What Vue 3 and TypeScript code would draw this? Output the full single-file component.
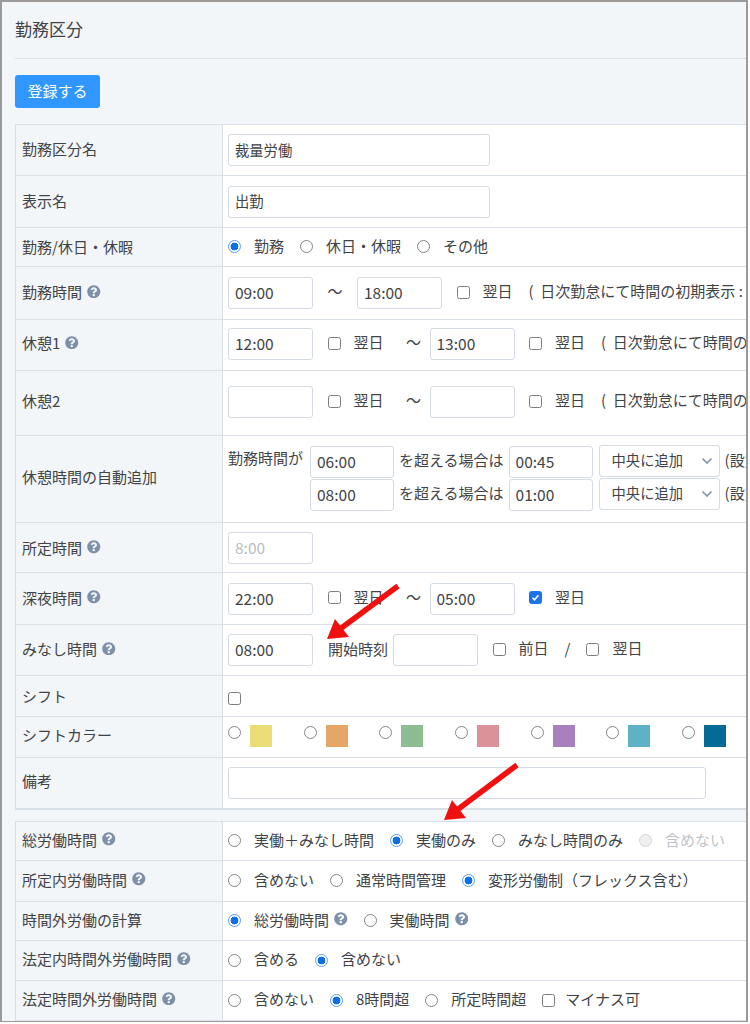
<script setup lang="ts">
const swatches: string[] = ['#ecdc78', '#e5a767', '#8cbc92', '#da9198', '#a87fbf', '#5fb2c6', '#056a96']
const helpPath = 'M504 256c0 136.997-111.043 248-248 248S8 392.997 8 256C8 119.083 119.043 8 256 8s248 111.083 248 248zM262.655 90c-54.497 0-89.255 22.957-116.549 63.758-3.536 5.286-2.353 12.415 2.715 16.258l34.699 26.31c5.205 3.947 12.621 3.008 16.665-2.122 17.864-22.658 30.113-35.797 57.303-35.797 20.429 0 45.698 13.148 45.698 32.958 0 14.976-12.363 22.667-32.534 33.976C247.128 238.528 216 254.941 216 296v4c0 6.627 5.373 12 12 12h56c6.627 0 12-5.373 12-12v-1.333c0-28.462 83.186-29.647 83.186-106.667 0-58.002-60.165-102-116.531-102zM256 338c-25.365 0-46 20.635-46 46 0 25.364 20.635 46 46 46s46-20.636 46-46c0-25.365-20.635-46-46-46z'
</script>

<template>
  <div class="frame">
    <h1 class="title">勤務区分</h1>
    <button class="submit" type="button">登録する</button>

    <section class="table">
      <div class="row h51">
        <div class="label">勤務区分名</div>
        <div class="cell"><input class="field wide" value="裁量労働" /></div>
      </div>
      <div class="row h52">
        <div class="label">表示名</div>
        <div class="cell"><input class="field wide" value="出勤" /></div>
      </div>
      <div class="row h39">
        <div class="label flat">勤務/休日・休暇</div>
        <div class="cell">
          <label class="opt"><input class="radio" type="radio" name="a" checked />勤務</label>
          <label class="opt"><input class="radio" type="radio" name="a" />休日・休暇</label>
          <label class="opt"><input class="radio" type="radio" name="a" />その他</label>
        </div>
      </div>
      <div class="row h53">
        <div class="label">勤務時間<svg class="help" viewBox="0 0 512 512"><path :d="helpPath" /></svg></div>
        <div class="cell">
          <input class="field time" value="09:00" />
          <span class="tilde">～</span>
          <input class="field time" value="18:00" />
          <label class="chk"><input class="box" type="checkbox" />翌日</label>
          <span class="note">(&nbsp;&nbsp;日次勤怠にて時間の初期表示 :</span>
        </div>
      </div>
      <div class="row h51">
        <div class="label up2">休憩1<svg class="help" viewBox="0 0 512 512"><path :d="helpPath" /></svg></div>
        <div class="cell lift">
          <input class="field time" value="12:00" />
          <label class="chk"><input class="box" type="checkbox" />翌日</label>
          <span class="tilde narrow">～</span>
          <input class="field time" value="13:00" />
          <label class="chk"><input class="box" type="checkbox" />翌日</label>
          <span class="note">(&nbsp;&nbsp;日次勤怠にて時間の初期表示 :</span>
        </div>
      </div>
      <div class="row h65">
        <div class="label up">休憩2</div>
        <div class="cell lift">
          <input class="field time" value="" />
          <label class="chk"><input class="box" type="checkbox" />翌日</label>
          <span class="tilde narrow">～</span>
          <input class="field time" value="" />
          <label class="chk"><input class="box" type="checkbox" />翌日</label>
          <span class="note">(&nbsp;&nbsp;日次勤怠にて時間の初期表示 :</span>
        </div>
      </div>
      <div class="row h87">
        <div class="label up">休憩時間の自動追加</div>
        <div class="cell auto">
          <span class="auto-lead">勤務時間が</span>
          <div class="auto-lines">
            <div class="auto-line">
              <input class="field time slim" value="06:00" />
              <span class="over">を超える場合は</span>
              <input class="field time slim" value="00:45" />
              <span class="select">中央に追加<svg class="caret" viewBox="0 0 12 8"><path d="M1.5 1.5 6 6l4.500-4.500" /></svg></span>
              <span class="set">(設定</span>
            </div>
            <div class="auto-line">
              <input class="field time slim" value="08:00" />
              <span class="over">を超える場合は</span>
              <input class="field time slim" value="01:00" />
              <span class="select">中央に追加<svg class="caret" viewBox="0 0 12 8"><path d="M1.5 1.5 6 6l4.500-4.500" /></svg></span>
              <span class="set">(設定</span>
            </div>
          </div>
        </div>
      </div>
      <div class="row h50">
        <div class="label flat">所定時間<svg class="help" viewBox="0 0 512 512"><path :d="helpPath" /></svg></div>
        <div class="cell"><input class="field time off" value="8:00" disabled /></div>
      </div>
      <div class="row h52">
        <div class="label">深夜時間<svg class="help" viewBox="0 0 512 512"><path :d="helpPath" /></svg></div>
        <div class="cell">
          <input class="field time" value="22:00" />
          <label class="chk"><input class="box" type="checkbox" />翌日</label>
          <span class="tilde narrow">～</span>
          <input class="field time" value="05:00" />
          <label class="chk"><input class="box" type="checkbox" checked />翌日</label>
        </div>
      </div>
      <div class="row h51">
        <div class="label">みなし時間<svg class="help" viewBox="0 0 512 512"><path :d="helpPath" /></svg></div>
        <div class="cell">
          <input class="field time" value="08:00" />
          <span class="start">開始時刻</span>
          <input class="field time" value="" />
          <label class="chk"><input class="box" type="checkbox" />前日</label>
          <span class="slash">/</span>
          <label class="chk tight"><input class="box" type="checkbox" />翌日</label>
        </div>
      </div>
      <div class="row h41">
        <div class="label flat">シフト</div>
        <div class="cell"><input class="box low" type="checkbox" /></div>
      </div>
      <div class="row h41">
        <div class="label up">シフトカラー</div>
        <div class="cell colors">
          <label v-for="c in swatches" :key="c" class="color">
            <input class="radio" type="radio" name="color" />
            <span class="swatch" :style="{ background: c }"></span>
          </label>
        </div>
      </div>
      <div class="row h51">
        <div class="label up">備考</div>
        <div class="cell"><input class="field memo" value="" /></div>
      </div>
    </section>

    <section class="table second">
      <div class="row h39">
        <div class="label">総労働時間<svg class="help" viewBox="0 0 512 512"><path :d="helpPath" /></svg></div>
        <div class="cell">
          <label class="opt"><input class="radio" type="radio" name="b" />実働＋みなし時間</label>
          <label class="opt"><input class="radio" type="radio" name="b" checked />実働のみ</label>
          <label class="opt"><input class="radio" type="radio" name="b" />みなし時間のみ</label>
          <label class="opt muted"><input class="radio" type="radio" name="b" disabled />含めない</label>
        </div>
      </div>
      <div class="row h41">
        <div class="label">所定内労働時間<svg class="help" viewBox="0 0 512 512"><path :d="helpPath" /></svg></div>
        <div class="cell">
          <label class="opt"><input class="radio" type="radio" name="c" />含めない</label>
          <label class="opt"><input class="radio" type="radio" name="c" />通常時間管理</label>
          <label class="opt"><input class="radio" type="radio" name="c" checked />変形労働制（フレックス含む）</label>
        </div>
      </div>
      <div class="row h39">
        <div class="label">時間外労働の計算</div>
        <div class="cell">
          <label class="opt"><input class="radio" type="radio" name="d" checked />総労働時間<svg class="help inline" viewBox="0 0 512 512"><path :d="helpPath" /></svg></label>
          <label class="opt"><input class="radio" type="radio" name="d" />実働時間<svg class="help inline" viewBox="0 0 512 512"><path :d="helpPath" /></svg></label>
        </div>
      </div>
      <div class="row h40">
        <div class="label">法定内時間外労働時間<svg class="help" viewBox="0 0 512 512"><path :d="helpPath" /></svg></div>
        <div class="cell">
          <label class="opt"><input class="radio" type="radio" name="e" />含める</label>
          <label class="opt"><input class="radio" type="radio" name="e" checked />含めない</label>
        </div>
      </div>
      <div class="row h40">
        <div class="label">法定時間外労働時間<svg class="help" viewBox="0 0 512 512"><path :d="helpPath" /></svg></div>
        <div class="cell">
          <label class="opt"><input class="radio" type="radio" name="f" />含めない</label>
          <label class="opt"><input class="radio" type="radio" name="f" checked />8時間超</label>
          <label class="opt"><input class="radio" type="radio" name="f" />所定時間超</label>
          <label class="chk small"><input class="box" type="checkbox" />マイナス可</label>
        </div>
      </div>
    </section>

    <svg class="arrows" viewBox="0 0 748 1022" aria-hidden="true">
      <path d="M398 586 340 629" />
      <polygon points="327,639 335,619 349,637" />
      <path d="M517 765 457 810" />
      <polygon points="444,820 452,800 466,818" />
    </svg>
  </div>
</template>

<style>
body { background: #fff; }
</style>

<style scoped>
.frame {
  position: relative;
  box-sizing: border-box;
  width: 748px;
  height: 1022px;
  padding: 0 0 0 13px;
  overflow: hidden;
  border: 2px solid #9a9a9a;
  border-bottom-width: 1px;
  background: #f3f6f8;
  color: #3f4347;
  font-family: "Noto Sans CJK JP", "Noto Sans", sans-serif;
  font-size: 15px;
}
.title {
  height: 57px;
  margin: 0;
  box-sizing: border-box;
  padding-top: 14px;
  border-bottom: 1px solid #dbe0e4;
  color: #3f4347;
  font-size: 17px;
  font-weight: 400;
  line-height: 26px;
  width: 733px;
}
.submit {
  display: block;
  width: 85px;
  height: 33px;
  margin: 16px 0 16px;
  padding: 0 0 2px;
  border: 0;
  border-radius: 3px;
  background: #2f97ff;
  color: #fff;
  font: inherit;
  font-size: 15px;
}
.table {
  width: 800px;
  border: 1px solid #d8dfe7;
  border-right: 0;
}
.second { margin-top: 11px; }
.row {
  display: grid;
  grid-template-columns: 207px 1fr;
  box-sizing: border-box;
  border-bottom: 1px solid #d8dfe7;
}
.h39 { height: 39px; }
.h40 { height: 40px; }
.h41 { height: 41px; }
.h50 { height: 50px; }
.h51 { height: 51px; }
.h52 { height: 52px; }
.h53 { height: 53px; }
.h65 { height: 65px; }
.h87 { height: 87px; }
.label {
  display: flex;
  align-items: center;
  padding-left: 6px;
  padding-bottom: 3px;
  border-right: 1px solid #d8dfe7;
  background: #f3f6f8;
  font-size: 15px;
  white-space: nowrap;
}
.label.flat { padding-bottom: 1px; }
.label.up2 { padding-bottom: 5px; }
.label.up { padding-bottom: 6px; }
.second .label { padding-bottom: 4px; }
.cell {
  display: flex;
  align-items: center;
  padding-left: 5px;
  background: #fff;
  white-space: nowrap;
}
.cell.lift { padding-bottom: 2px; }
.field {
  box-sizing: border-box;
  height: 32px;
  padding: 0 6px 2px;
  border: 1px solid #d5dbe2;
  border-radius: 3px;
  outline: 0;
  background: #fff;
  color: #3f4347;
  font: inherit;
  font-size: 15.5px;
}
.wide { width: 262px; font-size: 14.3px; }
.time { width: 85px; flex: none; }
.slim { width: 84px; }
.memo { width: 478px; }
.off { color: #b9bdc2; background: #fff; }
.tilde {
  width: 44px;
  flex: none;
  margin-bottom: 5px;
  text-align: center;
}
.tilde.narrow {
  width: 32px;
  margin-left: 14px;
}
.chk {
  display: flex;
  align-items: center;
  gap: 13px;
  margin-left: 14.5px;
  margin-bottom: 5px;
}
.chk.tight { margin-left: 16px; }
.chk.small { gap: 10px; margin-left: 0; margin-bottom: 4px; }
.note { margin-left: 16px; margin-bottom: 5px; }
.box, .radio {
  appearance: none;
  flex: none;
  box-sizing: border-box;
  width: 13px;
  height: 13px;
  margin: 3px 0 0;
  background: #fff;
}
.box {
  border: 1px solid #7d7d7d;
  border-radius: 2.5px;
}
.box:checked {
  border-color: #1a73e8;
  background: #1a73e8 url("data:image/svg+xml,%3Csvg xmlns='http://www.w3.org/2000/svg' viewBox='0 0 13 13'%3E%3Cpath d='M3 6.800 5.400 9.200 10 3.800' fill='none' stroke='white' stroke-width='2'/%3E%3C/svg%3E");
}
.low { margin-top: 5px; }
.radio {
  border: 1px solid #858585;
  border-radius: 50%;
}
.radio:checked {
  border-color: #5a9df2;
  background: radial-gradient(circle, #0f6fe6 0 3.600px, #fff 4.200px);
}
.radio:disabled {
  border-color: #d5d5d5;
  background: #efefef;
}
.opt {
  display: flex;
  align-items: center;
  gap: 13px;
  margin-right: 16px;
  margin-bottom: 4px;
}
.muted { color: #bfc3c7; }
.help {
  flex: none;
  width: 13.500px;
  height: 13.500px;
  margin-left: 5px;
  fill: #7d90a8;
}
.help.inline { margin-left: -8px; }
.auto { align-items: flex-start; padding-top: 10px; }
.auto-lead { margin-top: 1px; margin-right: 7px; }
.auto-lines { display: flex; flex-direction: column; gap: 1px; }
.auto-line { display: flex; align-items: center; height: 32px; }
.over { margin: 0 5px 5px; }
.select {
  display: flex;
  align-items: center;
  justify-content: space-between;
  box-sizing: border-box;
  flex: none;
  width: 121px;
  height: 32px;
  margin: -1.5px 0 1.5px 6px;
  padding: 0 6px 3px 12px;
  border: 1px solid #d5dbe2;
  border-radius: 3px;
  background: #fff;
  font-size: 14.3px;
}
.caret {
  width: 12px;
  height: 8px;
  margin-top: 3px;
  fill: none;
  stroke: #8796aa;
  stroke-width: 1.700;
}
.set { margin-left: 5px; margin-bottom: 5px; }
.start { margin: 0 5px 4px 15px; }
.slash { margin-left: 16px; margin-bottom: 4px; }
.colors { align-items: flex-start; padding-top: 8px; }
.color {
  display: flex;
  align-items: flex-start;
  gap: 9px;
  width: 75.700px;
  flex: none;
}
.color .radio { margin-top: 1px; }
.swatch {
  width: 22px;
  height: 22px;
}
.arrows {
  position: absolute;
  left: -2px;
  top: -2px;
  width: 748px;
  height: 1022px;
  pointer-events: none;
}
.arrows path { fill: none; stroke: #f01010; stroke-width: 5.500; }
.arrows polygon { fill: #f01010; }
</style>
